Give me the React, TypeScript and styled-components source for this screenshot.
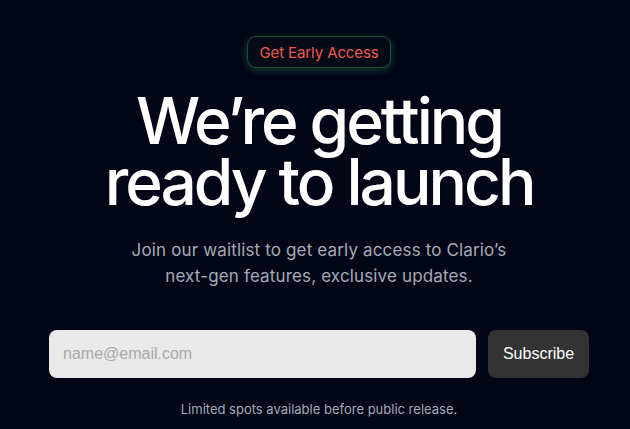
import React from 'react';
import styled, { createGlobalStyle } from 'styled-components';

const GlobalStyle = createGlobalStyle`
  html, body {
    margin: 0;
    padding: 0;
    background: #020617;
  }
  body {
    font-family: Inter, "Noto Sans", sans-serif;
  }
`;

const App = () => {
  return (
    <>
      <GlobalStyle />
      <Page>
        <Badge>Get Early Access</Badge>
        <Title>
          We’re getting
          <br />
          ready to launch
        </Title>
        <Subtitle>
          Join our waitlist to get early access to Clario’s
          <br />
          next-gen features, exclusive updates.
        </Subtitle>
        <Form onSubmit={(e) => e.preventDefault()}>
          <EmailInput type="email" placeholder="name@email.com" />
          <SubmitButton type="submit">Subscribe</SubmitButton>
        </Form>
        <Note>Limited spots available before public release.</Note>
      </Page>
    </>
  );
};

export default App;

const Page = styled.main`
  width: 100%;
  height: 429px;
  box-sizing: border-box;
  padding: 36px 0 0 8px;
  display: flex;
  flex-direction: column;
  align-items: center;
  color: #fff;
  overflow: hidden;
`;

const Badge = styled.div`
  box-sizing: border-box;
  height: 32px;
  padding: 0 11px;
  display: flex;
  align-items: center;
  border: 1px solid #1f4a3a;
  border-radius: 9px;
  background: #050b16;
  box-shadow: 0 2px 8px rgba(52, 168, 110, 0.35);
  color: #f0584f;
  font-size: 15px;
  letter-spacing: -0.1px;
`;

const Title = styled.h1`
  margin: 22px 0 0;
  font-size: 64px;
  line-height: 61px;
  font-weight: 500;
  letter-spacing: -3px;
  text-align: center;
  color: #fff;
`;

const Subtitle = styled.p`
  margin: 25px 0 0;
  font-size: 17px;
  line-height: 26px;
  text-align: center;
  color: #a5abb6;
  letter-spacing: 0.15px;
`;

const Form = styled.form`
  margin-top: 41px;
  display: flex;
  gap: 12px;
`;

const EmailInput = styled.input`
  box-sizing: border-box;
  width: 427px;
  height: 48px;
  padding: 0 14px;
  border: none;
  border-radius: 8px;
  background: #e9e9e9;
  font-family: "Liberation Sans", Arial, sans-serif;
  font-size: 16px;
  color: #333;
  outline: none;

  &::placeholder {
    color: #a9a9a9;
  }
`;

const SubmitButton = styled.button`
  box-sizing: border-box;
  width: 101px;
  height: 48px;
  border: none;
  border-radius: 8px;
  background: #333333;
  color: #fff;
  font-family: "Liberation Sans", Arial, sans-serif;
  font-size: 16px;
  cursor: pointer;
`;

const Note = styled.p`
  margin: 23px 0 0;
  font-size: 13px;
  color: #a3abb9;
`;
